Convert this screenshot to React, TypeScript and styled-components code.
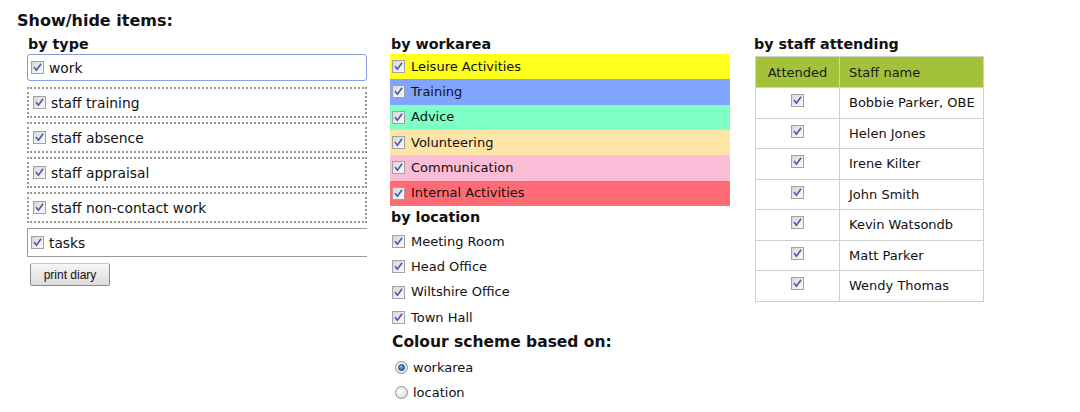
import React from "react";
import styled, { createGlobalStyle } from "styled-components";

const GlobalStyle = createGlobalStyle`
  html, body { margin: 0; padding: 0; background: #fff; }
  body {
    font-family: "DejaVu Sans", Verdana, sans-serif;
    color: #111;
    font-size: 13px;
  }
`;

const Page = styled.div`
  padding: 11px 0 0 17px;
`;

const Title = styled.h2`
  margin: 0;
  font-size: 16px;
  line-height: 20px;
  font-weight: bold;
`;

const Columns = styled.div`
  display: flex;
  align-items: flex-start;
  margin: 3px 0 0 10px;
`;

const Column = styled.div<{ $w?: number; $gap?: number }>`
  width: ${(p) => (p.$w ? `${p.$w}px` : "auto")};
  margin-left: ${(p) => p.$gap ?? 0}px;
  display: flex;
  flex-direction: column;
`;

const Heading = styled.h3<{ $lh?: number; $indent?: number }>`
  margin: 0;
  padding-left: ${(p) => p.$indent ?? 1}px;
  font-size: 14.3px;
  line-height: ${(p) => p.$lh ?? 20}px;
  font-weight: bold;
`;

const BigHeading = styled.h3`
  margin: 0;
  padding-left: 2px;
  font-size: 15.5px;
  line-height: 25px;
  font-weight: bold;
`;

const CheckBox = styled.span`
  display: inline-flex;
  box-sizing: border-box;
  width: 13px;
  height: 13px;
  flex: none;
  border: 1px solid #a2a2a2;
  background: linear-gradient(135deg, #d6d6d6 0%, #eeeeee 60%, #f8f8f8 100%);
  align-items: center;
  justify-content: center;
`;

const Check = () => (
  <CheckBox>
    <svg width="11" height="11" viewBox="0 0 11 11">
      <path d="M2.5 5.6 L4.4 8.2 L8.6 2.4" fill="none" stroke="#4659ad" strokeWidth="1.6" strokeLinecap="square" />
    </svg>
  </CheckBox>
);

const TypeBox = styled.div<{ $kind: "focus" | "dotted" | "solid"; $mt: number }>`
  box-sizing: border-box;
  display: flex;
  align-items: center;
  gap: 5px;
  margin-top: ${(p) => p.$mt}px;
  ${(p) =>
    p.$kind === "focus"
      ? `height: 27px; border: 1px solid #8c9ae0; border-radius: 3px; padding-left: 3px;`
      : p.$kind === "dotted"
      ? `height: 31px; border: 2px dotted #9a9a8c; padding-left: 4px;`
      : `height: 29px; border: 1px solid #9a9a9a; border-right: none; padding-left: 3px;`}
`;

const Label = styled.span<{ $size?: number }>`
  font-size: ${(p) => p.$size ?? 13}px;
  line-height: 16px;
  white-space: nowrap;
`;

const PrintButton = styled.button`
  margin: 6px 0 0 3px;
  width: 80px;
  height: 23px;
  box-sizing: border-box;
  font-family: "Liberation Sans", Arial, sans-serif;
  font-size: 12px;
  color: #111;
  border: 1px solid #8a8a8a;
  border-top-color: #d8d27a;
  border-radius: 2px;
  background: linear-gradient(#f6f6f6, #dcdcdc);
  padding: 0;
`;

const AreaRow = styled.div<{ $bg: string }>`
  height: 25.33px;
  box-sizing: border-box;
  background: ${(p) => p.$bg};
  display: flex;
  align-items: center;
  gap: 6px;
  padding-left: 2px;
`;

const LocRow = styled.div`
  height: 25.33px;
  display: flex;
  align-items: center;
  gap: 6px;
  padding-left: 2px;
`;

const RadioRow = styled.div`
  height: 25px;
  display: flex;
  align-items: center;
  gap: 5px;
  padding-left: 5px;
`;

const RadioCircle = styled.span<{ $on?: boolean }>`
  box-sizing: border-box;
  width: 13px;
  height: 13px;
  border-radius: 50%;
  border: 1px solid #8f8f8f;
  background: radial-gradient(circle at 40% 35%, #ffffff 0%, #e6e6e6 60%, #cfcfcf 100%);
  display: inline-flex;
  align-items: center;
  justify-content: center;
  &::after {
    content: "";
    display: ${(p) => (p.$on ? "block" : "none")};
    width: 7px;
    height: 7px;
    box-sizing: border-box;
    border-radius: 50%;
    border: 1px solid #1d3f66;
    background: radial-gradient(circle at 40% 35%, #7cc4f2 0%, #1f7fc4 60%, #0f4f86 100%);
  }
`;

const StaffTable = styled.table`
  margin: 2px 0 0 1px;
  border-collapse: collapse;
  width: 229px;
  font-size: 13px;
`;

const HeadCell = styled.th<{ $w?: number; $align?: string }>`
  background: #a3c13a;
  border: 1px solid #cfcfcf;
  font-weight: normal;
  height: 30px;
  padding: 0;
  width: ${(p) => (p.$w ? `${p.$w}px` : "auto")};
  text-align: ${(p) => p.$align ?? "left"};
  padding-left: ${(p) => (p.$align === "center" ? 0 : 9)}px;
  color: #1a1a1a;
`;

const Cell = styled.td<{ $center?: boolean }>`
  border: 1px solid #cfcfcf;
  height: 29.5px;
  padding: 0 0 0 ${(p) => (p.$center ? 0 : 9)}px;
  text-align: ${(p) => (p.$center ? "center" : "left")};
  white-space: nowrap;
`;

const CellInner = styled.div`
  display: flex;
  justify-content: center;
  align-items: center;
  padding-bottom: 4px;
`;

const types = [
  { label: "work", kind: "focus" as const, mt: 0 },
  { label: "staff training", kind: "dotted" as const, mt: 6 },
  { label: "staff absence", kind: "dotted" as const, mt: 4 },
  { label: "staff appraisal", kind: "dotted" as const, mt: 4 },
  { label: "staff non-contact work", kind: "dotted" as const, mt: 4 },
  { label: "tasks", kind: "solid" as const, mt: 5 },
];

const areas = [
  { label: "Leisure Activities", bg: "#ffff1c" },
  { label: "Training", bg: "#80a4ff" },
  { label: "Advice", bg: "#7dffc6" },
  { label: "Volunteering", bg: "#fde4a7" },
  { label: "Communication", bg: "#fbbcd6" },
  { label: "Internal Activities", bg: "#ff6b75" },
];

const locations = ["Meeting Room", "Head Office", "Wiltshire Office", "Town Hall"];

const staff = [
  "Bobbie Parker, OBE",
  "Helen Jones",
  "Irene Kilter",
  "John Smith",
  "Kevin Watsondb",
  "Matt Parker",
  "Wendy Thomas",
];

export default function App() {
  return (
    <>
      <GlobalStyle />
      <Page>
        <Title>Show/hide items:</Title>
        <Columns>
          <Column $w={340}>
            <Heading>by type</Heading>
            {types.map((t) => (
              <TypeBox key={t.label} $kind={t.kind} $mt={t.mt}>
                <Check />
                <Label $size={13.8}>{t.label}</Label>
              </TypeBox>
            ))}
            <div>
              <PrintButton>print diary</PrintButton>
            </div>
          </Column>
          <Column $w={340} $gap={23}>
            <Heading>by workarea</Heading>
            {areas.map((a) => (
              <AreaRow key={a.label} $bg={a.bg}>
                <Check />
                <Label>{a.label}</Label>
              </AreaRow>
            ))}
            <Heading $lh={23}>by location</Heading>
            {locations.map((l) => (
              <LocRow key={l}>
                <Check />
                <Label>{l}</Label>
              </LocRow>
            ))}
            <BigHeading>Colour scheme based on:</BigHeading>
            <RadioRow>
              <RadioCircle $on />
              <Label>workarea</Label>
            </RadioRow>
            <RadioRow>
              <RadioCircle />
              <Label>location</Label>
            </RadioRow>
          </Column>
          <Column $gap={24}>
            <Heading $indent={0}>by staff attending</Heading>
            <StaffTable>
              <thead>
                <tr>
                  <HeadCell $w={83} $align="center">Attended</HeadCell>
                  <HeadCell>Staff name</HeadCell>
                </tr>
              </thead>
              <tbody>
                {staff.map((s) => (
                  <tr key={s}>
                    <Cell $center>
                      <CellInner>
                        <Check />
                      </CellInner>
                    </Cell>
                    <Cell>{s}</Cell>
                  </tr>
                ))}
              </tbody>
            </StaffTable>
          </Column>
        </Columns>
      </Page>
    </>
  );
}
